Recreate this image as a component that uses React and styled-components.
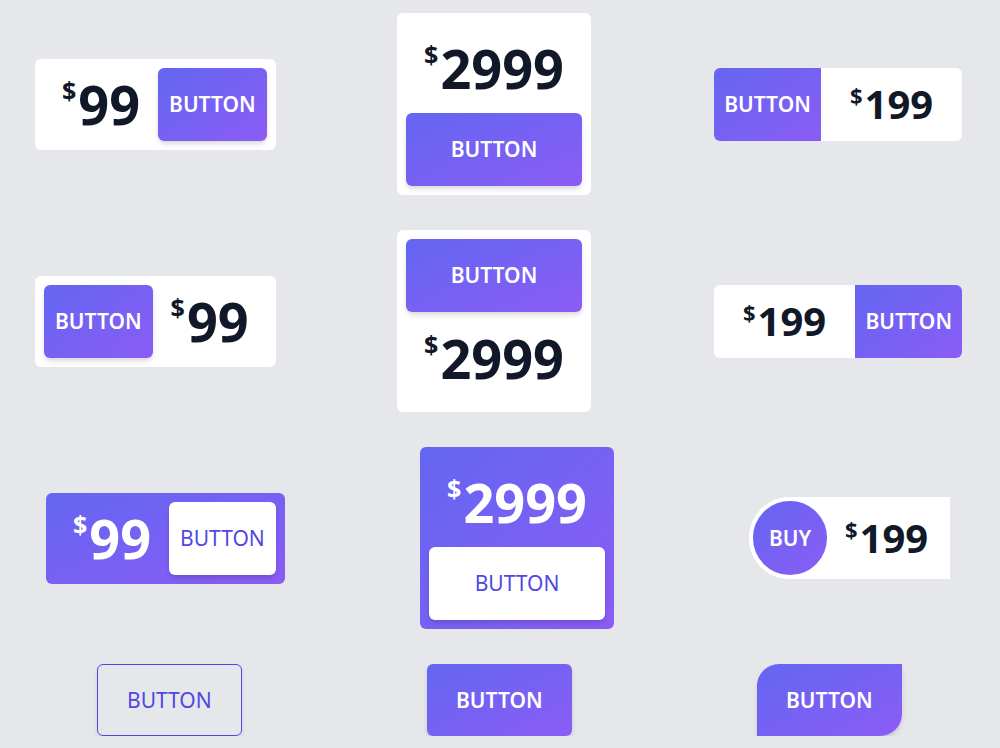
import React from "react";
import styled, { createGlobalStyle, css } from "styled-components";

const brand = "linear-gradient(to bottom right, #6366f1, #8b5cf6)";

const GlobalStyle = createGlobalStyle`
	html, body {
		margin: 0;
		background: #e5e7eb;
		font-family: "Noto Sans", "Open Sans", sans-serif;
		overflow: hidden;
	}
`;

const Price = ({ amount, light, small }) => {
	return (
		<PriceWrap $light={light} $small={small}>
			<Dollar $small={small}>$</Dollar>
			<Amount $small={small}>{amount}</Amount>
		</PriceWrap>
	);
};

const App = () => {
	return (
		<>
			<GlobalStyle />
			<Page>
				{/* row 1 */}
				<Card>
					<PriceSlot>
						<Price amount="99" />
					</PriceSlot>
					<Button>Button</Button>
				</Card>
				<Card $column>
					<PriceSlot $tall>
						<Price amount="2999" />
					</PriceSlot>
					<Button $block>Button</Button>
				</Card>
				<Card $flat>
					<Button $flush="left">Button</Button>
					<PriceSlot $wide>
						<Price amount="199" small />
					</PriceSlot>
				</Card>

				{/* row 2 */}
				<Card>
					<Button>Button</Button>
					<PriceSlot>
						<Price amount="99" />
					</PriceSlot>
				</Card>
				<Card $column>
					<Button $block>Button</Button>
					<PriceSlot $tall>
						<Price amount="2999" />
					</PriceSlot>
				</Card>
				<Card $flat>
					<PriceSlot $wide>
						<Price amount="199" small />
					</PriceSlot>
					<Button $flush="right">Button</Button>
				</Card>

				{/* row 3 */}
				<Card $brand $shift={11}>
					<PriceSlot>
						<Price amount="99" light />
					</PriceSlot>
					<Button $tone="white">Button</Button>
				</Card>
				<Card $brand $column $shift={23}>
					<PriceSlot $tall>
						<Price amount="2999" light />
					</PriceSlot>
					<Button $tone="white" $block>
						Button
					</Button>
				</Card>
				<Pill $shift={35}>
					<Circle>Buy</Circle>
					<Price amount="199" small />
				</Pill>

				{/* row 4 */}
				<Button $tone="outline" $solo $shift={62}>
					Button
				</Button>
				<Button $solo $shift={30}>
					Button
				</Button>
				<Button $solo $corner $shift={43}>
					Button
				</Button>
			</Page>
		</>
	);
};

export default App;

const Page = styled.div`
	display: grid;
	grid-template-columns: 362px 317px 1fr;
	row-gap: 35px;
	align-items: center;
	justify-items: start;
	padding: 13px 0 0 35px;
`;

const Card = styled.div`
	display: flex;
	flex-direction: ${(p) => (p.$column ? "column" : "row")};
	align-items: ${(p) => (p.$column ? "stretch" : "center")};
	padding: ${(p) => (p.$flat ? "0" : "9px")};
	width: ${(p) => (p.$column ? "176px" : "auto")};
	margin-left: ${(p) => p.$shift || 0}px;
	border-radius: 6px;
	background: ${(p) => (p.$brand ? brand : "#fff")};
`;

const PriceSlot = styled.div`
	display: flex;
	align-items: center;
	justify-content: center;
	padding: 0 ${(p) => (p.$wide ? 29 : 18)}px;
	height: ${(p) => (p.$tall ? "91px" : "auto")};
`;

const PriceWrap = styled.div`
	display: flex;
	align-items: flex-start;
	color: ${(p) => (p.$light ? "#fff" : "#111827")};
	font-weight: 700;
`;

const Dollar = styled.span`
	font-size: ${(p) => (p.$small ? 22 : 25)}px;
	line-height: 1;
	margin-top: ${(p) => (p.$small ? 0 : 1)}px;
	margin-right: 2px;
`;

const Amount = styled.span`
	font-size: ${(p) => (p.$small ? 40 : 54)}px;
	line-height: 1;
`;

const Button = styled.button`
	display: flex;
	align-items: center;
	justify-content: center;
	flex-shrink: 0;
	height: ${(p) => (p.$solo ? 72 : 73)}px;
	padding: 0 ${(p) => (p.$solo ? 29 : 11)}px;
	margin-left: ${(p) => p.$shift || 0}px;
	width: ${(p) => (p.$block ? "100%" : "auto")};
	border: none;
	border-radius: 6px;
	font-family: inherit;
	font-size: 21px;
	font-weight: 600;
	line-height: 1;
	text-transform: uppercase;
	color: #fff;
	background: ${brand};
	box-shadow: 0 4px 6px -1px rgba(0, 0, 0, 0.12),
		0 2px 4px -2px rgba(0, 0, 0, 0.1);
	cursor: pointer;

	${(p) =>
		p.$tone === "white" &&
		css`
			background: #fff;
			color: #5048e5;
			font-weight: 400;
		`}

	${(p) =>
		p.$tone === "outline" &&
		css`
			background: transparent;
			color: #5048e5;
			font-weight: 400;
			border: 1px solid #5048e5;
			box-shadow: 0 2px 4px rgba(0, 0, 0, 0.1);
		`}

	${(p) =>
		p.$flush &&
		css`
			width: 107px;
			box-shadow: none;
			border-radius: ${p.$flush === "left" ? "6px 0 0 6px" : "0 6px 6px 0"};
		`}

	${(p) =>
		p.$corner &&
		css`
			border-radius: 22px 0 22px 0;
		`}
`;

const Pill = styled.div`
	display: flex;
	align-items: center;
	gap: 14px;
	height: 82px;
	padding-right: 22px;
	margin-left: ${(p) => p.$shift || 0}px;
	background: #fff;
	border-radius: 41px 0 0 41px;
`;

const Circle = styled.button`
	width: 82px;
	height: 82px;
	border: 4px solid #fff;
	border-radius: 50%;
	background: ${brand};
	color: #fff;
	font-family: inherit;
	font-size: 21px;
	font-weight: 600;
	text-transform: uppercase;
	cursor: pointer;
`;
